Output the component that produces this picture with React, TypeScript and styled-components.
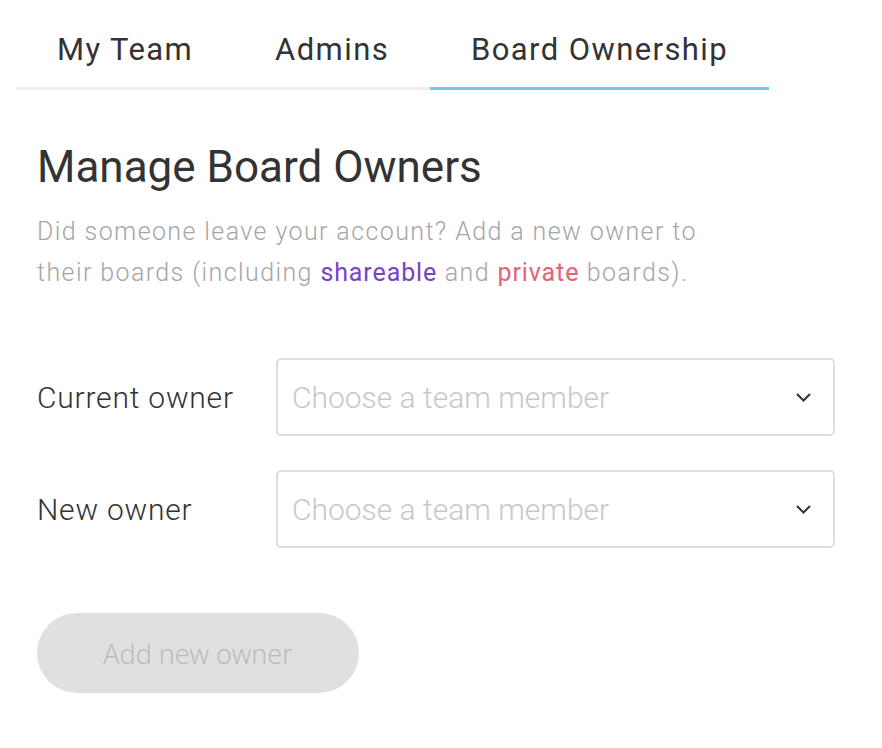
import styled, { createGlobalStyle } from 'styled-components';

const GlobalStyle = createGlobalStyle`
  html, body {
    margin: 0;
    padding: 0;
    background: #fff;
    font-family: Roboto, 'Liberation Sans', sans-serif;
    color: #333;
  }
`;

const Page = styled.div`
  width: 882px;
  min-height: 748px;
  box-sizing: border-box;
`;

const TabBar = styled.div`
  display: flex;
  margin-left: 16px;
`;

const Tab = styled.div<{ $active?: boolean }>`
  padding: 32px 41px 19px;
  font-size: 31px;
  line-height: 36px;
  letter-spacing: 1.4px;
  color: #333;
  border-bottom: 3px solid ${(p) => (p.$active ? '#76c7ec' : '#efefef')};
  white-space: nowrap;
  cursor: pointer;
`;

const Content = styled.div`
  padding-left: 37px;
`;

const Title = styled.h1`
  margin: 52px 0 0;
  font-size: 44px;
  line-height: 50px;
  font-weight: 400;
  color: #333;
`;

const Description = styled.p`
  margin: 19px 0 0;
  max-width: 700px;
  font-size: 25px;
  line-height: 41px;
  font-weight: 300;
  letter-spacing: 1.4px;
  color: #a6a6a6;
`;

const Highlight = styled.span<{ $color: string }>`
  color: ${(p) => p.$color};
  font-weight: 400;
  letter-spacing: 0.9px;
`;

const Form = styled.div`
  display: flex;
  flex-direction: column;
  gap: 34px;
  margin-top: 65px;
`;

const Row = styled.div`
  display: flex;
  align-items: center;
`;

const Label = styled.div`
  width: 239px;
  font-size: 30px;
  font-weight: 300;
  letter-spacing: 0.8px;
  color: #333;
`;

const Select = styled.div`
  display: flex;
  align-items: center;
  justify-content: space-between;
  width: 559px;
  height: 78px;
  box-sizing: border-box;
  padding: 0 22px 0 14px;
  border: 2px solid #dedede;
  border-radius: 5px;
  cursor: pointer;
`;

const Placeholder = styled.span`
  font-size: 30px;
  font-weight: 300;
  color: #c8c8c8;
`;

const Button = styled.button`
  margin-top: 65px;
  width: 322px;
  height: 80px;
  border: none;
  border-radius: 40px;
  background: #e0e0e0;
  color: #b8b8b8;
  font-family: 'Open Sans', Roboto, sans-serif;
  font-size: 27px;
  font-weight: 300;
`;

function Chevron() {
  return (
    <svg width='15' height='9' viewBox='0 0 15 9'>
      <polyline
        points='1,1 7.5,7.5 14,1'
        fill='none'
        stroke='#333'
        strokeWidth='2'
      />
    </svg>
  );
}

function OwnerSelect({ label }: { label: string }) {
  return (
    <Row>
      <Label>{label}</Label>
      <Select>
        <Placeholder>Choose a team member</Placeholder>
        <Chevron />
      </Select>
    </Row>
  );
}

export default function App() {
  return (
    <Page>
      <GlobalStyle />
      <TabBar>
        <Tab>My Team</Tab>
        <Tab>Admins</Tab>
        <Tab $active>Board Ownership</Tab>
      </TabBar>
      <Content>
        <Title>Manage Board Owners</Title>
        <Description>
          Did someone leave your account? Add a new owner to
          <br />
          their boards (including{' '}
          <Highlight $color='#7b40c8'>shareable</Highlight> and{' '}
          <Highlight $color='#e8607a'>private</Highlight> boards).
        </Description>
        <Form>
          <OwnerSelect label='Current owner' />
          <OwnerSelect label='New owner' />
        </Form>
        <Button disabled>Add new owner</Button>
      </Content>
    </Page>
  );
}
